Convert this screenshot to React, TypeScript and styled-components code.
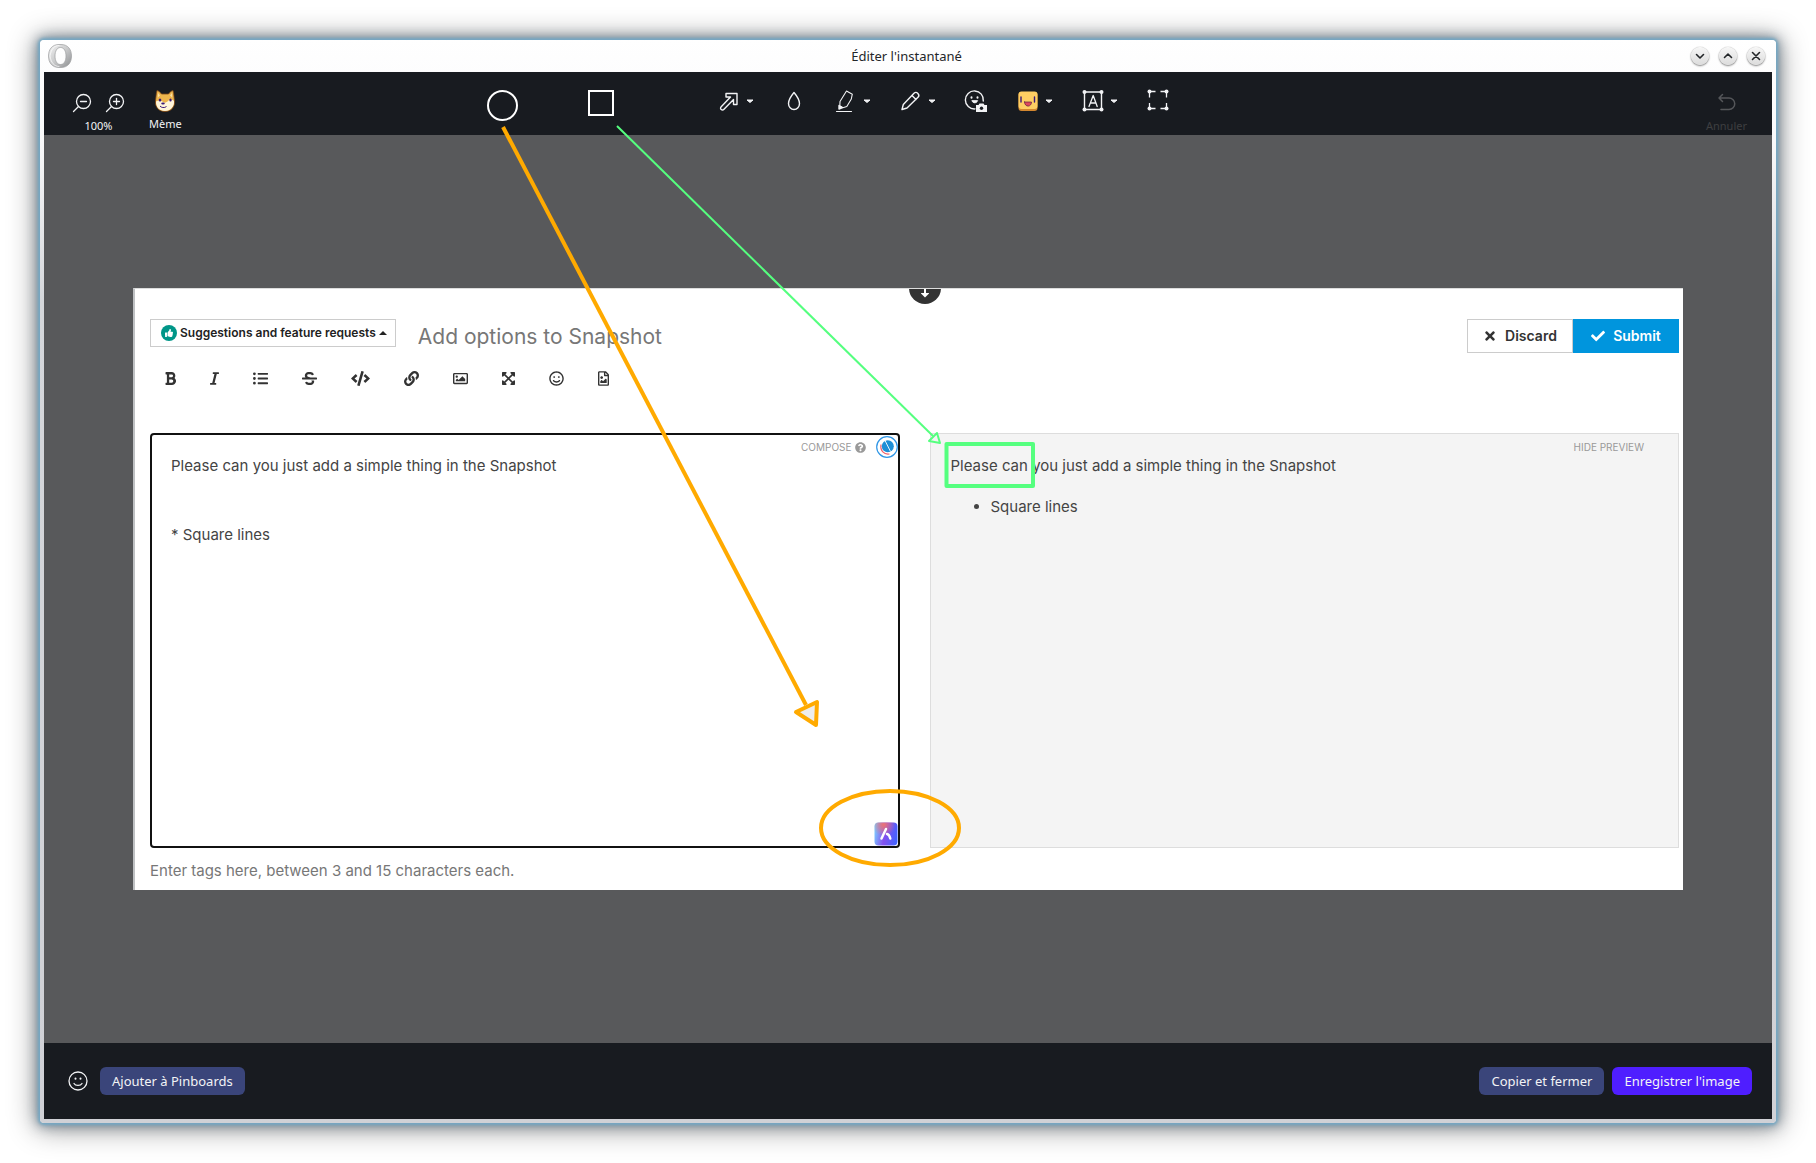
import React from "react";
import styled, { createGlobalStyle } from "styled-components";
import {
  FaBold,
  FaCheck,
  FaCode,
  FaExpandArrowsAlt,
  FaItalic,
  FaLink,
  FaListUl,
  FaQuestionCircle,
  FaRegFileImage,
  FaRegImage,
  FaRegSmile,
  FaStrikethrough,
  FaThumbsUp,
  FaTimes,
} from "react-icons/fa";

const uiFont = `"Noto Sans", sans-serif`;
const docFont = `Inter, "Liberation Sans", sans-serif`;

const GlobalStyle = createGlobalStyle`
  *, *::before, *::after { box-sizing: border-box; }
  body { margin: 0; background: #fff; font-family: ${uiFont}; }
  button { font: inherit; color: inherit; background: none; border: 0; padding: 0; cursor: pointer; }
  input, textarea { font: inherit; color: inherit; border: 0; padding: 0; margin: 0; background: none; outline: 0; }
  svg { display: block; flex: none; }
`;

const Desktop = styled.div`
  display: flex;
  min-height: 100vh;
  padding: 40px;
`;

const Window = styled.div`
  flex: 1;
  min-width: 0;
  display: flex;
  flex-direction: column;
  padding: 0 4px 4px;
  border-radius: 4px;
  background: linear-gradient(#fff 0, #f9f9fa 100px, #d5d7db 260px, #d0d1d6 100%);
  box-shadow:
    0 0 3px 2px #74a9c6,
    0 0 12px 3px rgba(70, 95, 115, 0.6),
    0 2px 28px 4px rgba(0, 0, 0, 0.42);
`;

const TitleBar = styled.header`
  display: grid;
  grid-template-columns: 1fr auto 1fr;
  align-items: center;
  height: 32px;
  padding: 0 7px 0 4px;
`;

const WindowTitle = styled.h1`
  margin: 0;
  font-size: 13px;
  font-weight: 400;
  line-height: 20px;
  color: #232629;
`;

const WindowControls = styled.div`
  display: flex;
  justify-content: flex-end;
  gap: 10px;
`;

const WindowControl = styled.button`
  display: grid;
  place-items: center;
  width: 18px;
  height: 18px;
  border-radius: 50%;
  background: linear-gradient(#f7f7f7, #dcdcdc);
  box-shadow: 0 0 1px rgba(0, 0, 0, 0.4), 0 1px 2px rgba(0, 0, 0, 0.45);
`;

const Content = styled.main`
  position: relative;
  flex: 1;
  display: flex;
  flex-direction: column;
`;

const Toolbar = styled.div`
  display: grid;
  grid-template-columns: 442px 1fr auto;
  align-items: start;
  height: 63px;
  padding: 17px 25px 0 0;
  background: #181b20;
  color: #f2f3f5;
  font-size: 11px;
  line-height: 14px;
`;

const ViewTools = styled.div`
  display: flex;
  gap: 24px;
  padding-left: 28px;
`;

const Zoom = styled.div`
  display: flex;
  flex-direction: column;
  align-items: center;
  gap: 6px;
  padding-top: 4px;
`;

const ZoomButtons = styled.div`
  display: flex;
  gap: 13px;
`;

const LabelledTool = styled.button<{ $muted?: boolean }>`
  display: flex;
  flex-direction: column;
  align-items: center;
  gap: ${(p) => (p.$muted ? "6px" : "4px")};
  color: ${(p) => (p.$muted ? "#3e3f41" : "inherit")};
`;

const ShapeTools = styled.div`
  display: flex;
  align-items: flex-start;
  gap: 100px;
`;

const Shapes = styled.div`
  display: flex;
  gap: 67px;
`;

const DrawTools = styled.div`
  display: flex;
  gap: 28px;
`;

const Tool = styled.button`
  display: flex;
  align-items: center;
  gap: 5px;
`;

const Canvas = styled.section`
  flex: 1;
  display: flex;
  padding: 153px 89px;
  background: #58595b;
`;

const Snapshot = styled.article`
  position: relative;
  flex: 1;
  min-width: 0;
  display: flex;
  flex-direction: column;
  overflow: hidden;
  padding: 30px 4px 0 15px;
  border-top: 1px solid #dcdddd;
  border-left: 2px solid #bfc1c3;
  background: #fff;
  color: #333;
  font-family: ${docFont};
`;

const Grip = styled.button`
  position: absolute;
  top: -17px;
  left: 50%;
  display: grid;
  place-items: end center;
  width: 32px;
  height: 32px;
  padding-bottom: 6px;
  border-radius: 50%;
  background: #333;
`;

const ComposerHead = styled.div`
  display: flex;
  align-items: flex-start;
  height: 34px;
`;

const CategoryButton = styled.button`
  display: flex;
  align-items: center;
  gap: 3px;
  height: 28px;
  padding: 0 8px 0 10px;
  border: 1px solid #ccc;
  color: #222;
  font-size: 12px;
  font-weight: 600;
  line-height: 16px;
  white-space: nowrap;
`;

const CategoryIcon = styled.span`
  display: grid;
  place-items: center;
  width: 16px;
  height: 16px;
  border-radius: 50%;
  background: #009688;
  color: #fff;
`;

const TopicTitle = styled.input`
  flex: 1;
  min-width: 0;
  height: 34px;
  padding: 0 22px;
  color: #777;
  font-size: 21px;
`;

const ActionButton = styled.button<{ $primary?: boolean }>`
  display: flex;
  align-items: center;
  justify-content: center;
  gap: 8px;
  width: 106px;
  height: 34px;
  border: 1px solid ${(p) => (p.$primary ? "#0095dd" : "#ccc")};
  background: ${(p) => (p.$primary ? "#0095dd" : "#fff")};
  color: ${(p) => (p.$primary ? "#fff" : "#333")};
  font-size: 14px;
  font-weight: 600;
  line-height: 20px;
`;

const FormatBar = styled.div`
  display: flex;
  align-items: center;
  gap: 34px;
  height: 20px;
  margin: 15px 0 45px;
  padding-left: 15px;
`;

const FormatButton = styled.button<{ $width: number }>`
  width: ${(p) => p.$width}px;

  svg {
    width: 100%;
    height: 15px;
  }
`;

const Panes = styled.div`
  flex: 1;
  display: grid;
  grid-template-columns: 1fr 1fr;
  gap: 30px;
  color: #444;
  font-size: 15px;
  line-height: 23px;
`;

const Pane = styled.section<{ $preview?: boolean }>`
  position: relative;
  display: flex;
  flex-direction: column;
  border: ${(p) => (p.$preview ? "1px solid #ddd" : "2px solid #111")};
  border-radius: ${(p) => (p.$preview ? "0" : "4px")};
  padding: ${(p) => (p.$preview ? "20px" : "0")};
  background: ${(p) => (p.$preview ? "#f4f4f4" : "#fff")};
`;

const ComposeArea = styled.textarea`
  flex: 1;
  display: block;
  width: 100%;
  padding: 19px;
  resize: none;
`;

const PaneCorner = styled.div<{ $inset?: boolean }>`
  position: absolute;
  top: 0;
  right: ${(p) => (p.$inset ? "34px" : "0")};
  display: flex;
  align-items: center;
  height: ${(p) => (p.$inset ? "26px" : "24px")};
  gap: 3px;
  color: #999;
  font-size: 10px;
  line-height: 14px;
`;

const CompassButton = styled.button`
  margin-left: 7px;
`;

const AssistantButton = styled.button`
  position: absolute;
  right: 0;
  bottom: 0;
`;

const Paragraph = styled.p`
  margin: 0 0 18px;
`;

const BulletList = styled.ul`
  margin: 0;
  padding-left: 40px;
`;

const TagsInput = styled.input`
  width: 100%;
  height: 42px;
  padding-top: 2px;
  font-size: 15px;
  color: #777;

  &::placeholder {
    color: #777;
    opacity: 1;
  }
`;

const Footer = styled.footer`
  display: flex;
  align-items: center;
  gap: 8px;
  height: 76px;
  padding: 0 20px 0 24px;
  background: #181b20;
  color: #f2f3f5;
`;

const FooterButton = styled.button<{ $accent?: boolean }>`
  height: 28px;
  padding: 0 12px;
  border-radius: 6px;
  background: ${(p) => (p.$accent ? "#4f1eff" : "#3a457a")};
  font-size: 13px;
  line-height: 18px;
  white-space: nowrap;
`;

const EmojiButton = styled.button`
  margin-right: 4px;
`;

const Spacer = styled.div`
  flex: 1;
`;

const Annotations = styled.svg`
  position: absolute;
  inset: 0;
  width: 100%;
  height: 100%;
  pointer-events: none;
`;

const line = {
  fill: "none",
  stroke: "currentColor",
  strokeLinecap: "round" as const,
  strokeLinejoin: "round" as const,
};

const OperaLogo = () => (
  <svg width="24" height="24" viewBox="0 0 24 24" aria-hidden="true">
    <defs>
      <linearGradient id="opera" x1="0" y1="0" x2="1" y2="1">
        <stop offset="0" stopColor="#f4f4f4" />
        <stop offset="0.5" stopColor="#c9cacb" />
        <stop offset="1" stopColor="#8c8e90" />
      </linearGradient>
    </defs>
    <path
      fillRule="evenodd"
      fill="url(#opera)"
      stroke="#9b9c9e"
      strokeWidth="0.7"
      d="M11 .5h2C20 .5 23.500 5.500 23.500 12S20 23.500 13 23.500h-2C4 23.500.5 18.500.5 12S4 .5 11 .5zM12.500 3.500c-3.500 0-5.500 3.500-5.500 8.500s2 8.500 5.500 8.500S18 17 18 12s-2-8.500-5.500-8.500z"
    />
    <path d="M11 1.500c-5 0-8 4-9 10.500 1 6.500 4 10.500 9 10.500" {...line} stroke="#fff" opacity="0.7" />
  </svg>
);

const ControlGlyph = ({ d }: { d: string }) => (
  <svg width="12" height="12" viewBox="0 0 12 12" aria-hidden="true">
    <path d={d} {...line} stroke="#232629" strokeWidth="1.6" />
  </svg>
);

const ZoomIcon = ({ plus }: { plus?: boolean }) => (
  <svg width="20" height="20" viewBox="0 0 20 20" aria-hidden="true">
    <g {...line} strokeWidth="1.3">
      <circle cx="11.500" cy="8.500" r="7" />
      <path d="M6.500 13.500l-5 5M8.500 8.500h6" />
      {plus && <path d="M11.500 5.500v6" />}
    </g>
  </svg>
);

const MemeIcon = () => (
  <svg width="24" height="24" viewBox="0 0 24 24" aria-hidden="true">
    <path
      d="M4 1.500c2 .5 3.500 2 4.500 3.500h7c1-1.500 2.500-3 4.500-3.500 1 4 1 7 1.500 10.500.5 5.500-3 10.500-9.500 10.500S2 17.500 2.500 12C3 8.500 3 5.500 4 1.500z"
      fill="#edb54d"
      stroke="#7a4416"
      strokeWidth="0.8"
    />
    <path d="M5 4l2 2.500-2.200 2zM19 4l-2 2.500 2.200 2z" fill="#fbdfa4" />
    <path d="M3 12.500c3-1.500 5-1 7 .5 2 1.500 3.500.5 5.500-1.500 2-1 4-1 5.500.5.500 5.500-3.500 10-9 10s-9-3.500-9-9.500z" fill="#fff5da" />
    <ellipse cx="7" cy="11" rx="1.300" ry="1.500" fill="#3c1a78" />
    <ellipse cx="17.500" cy="11" rx="1.200" ry="1.500" fill="#3c1a78" />
    <ellipse cx="10" cy="14.500" rx="1.800" ry="1.100" fill="#3c1a78" />
    <path d="M7 17c1 1.600 4.500 2.300 6.500.5" fill="none" stroke="#3c1a78" strokeWidth="1" />
  </svg>
);

const CircleTool = () => (
  <svg width="32" height="32" viewBox="0 0 32 32" aria-hidden="true">
    <circle cx="16.500" cy="16.500" r="14.500" fill="none" stroke="#fff" strokeWidth="2" />
  </svg>
);

const SquareTool = () => (
  <svg width="32" height="32" viewBox="0 0 32 32" aria-hidden="true">
    <path d="M4 2h24v24H4z" fill="none" stroke="#fff" strokeWidth="2" />
  </svg>
);

const ToolIcon = ({ children }: { children: React.ReactNode }) => (
  <svg width="24" height="24" viewBox="0 0 24 24" aria-hidden="true">
    <g {...line} strokeWidth="1.4">
      {children}
    </g>
  </svg>
);

const Caret = () => (
  <svg width="8" height="8" viewBox="0 0 8 8" aria-hidden="true">
    <path d="M1 3h6L4 5.500z" fill="currentColor" stroke="currentColor" strokeLinejoin="round" />
  </svg>
);

const Dots = ({ x1, y1, x2, y2 }: { x1: number; y1: number; x2: number; y2: number }) => (
  <g fill="currentColor" stroke="none">
    {[x1, x2].map((x) => [y1, y2].map((y) => <circle key={`${x}-${y}`} cx={x} cy={y} r="2" />))}
  </g>
);

const drawTools: { name: string; menu?: boolean; art: React.ReactNode }[] = [
  {
    name: "Flèche",
    menu: true,
    art: <path d="M9 4.500h11v11h-3.500v-5L7 20.300c-1 1-2 .9-2.800.2s-.9-1.900 0-2.800L13.500 8H9z" />,
  },
  { name: "Flou", art: <path d="M12 3.500c2.500 3 5.500 7.500 5.500 11a5.500 6 0 0 1-11 0c0-3.500 3-8 5.500-11z" /> },
  {
    name: "Surligneur",
    menu: true,
    art: (
      <>
        <path d="M12.500 2l5.800 3.200-1 4.800-4.500 7.500-4 1.200-3-1.700.2-4.500z" strokeWidth="1.1" />
        <path d="M5 16.500l3.500 2-3.500 1.500z" fill="currentColor" />
        <path d="M2.500 22.500h15" strokeWidth="1.1" />
      </>
    ),
  },
  {
    name: "Crayon",
    menu: true,
    art: <path d="M3 20.500l1.300-5L15 4.300c1.300-1.300 2.800-1 3.900.1s1.300 2.600.1 3.900L8 19zM13 6.500l4 4" />,
  },
  {
    name: "Selfie",
    art: (
      <>
        <path d="M11 19.900A9 9 0 1 1 19.300 12" />
        <path d="M7.500 8.300v.4M13.500 8.300v.4" strokeWidth="2" />
        <path d="M8 12c1 2.500 4.500 2.500 5.500 0z" fill="currentColor" strokeWidth="1" />
        <path d="M12 16h2.500l1-1.500h4l1 1.500H23v7H12z" fill="currentColor" stroke="none" />
        <circle cx="17.500" cy="19.300" r="1.700" fill="#181b20" stroke="none" />
      </>
    ),
  },
  {
    name: "Autocollant",
    menu: true,
    art: (
      <g stroke="none">
        <rect x="2.500" y="3" width="19" height="19" rx="3" fill="#d3872f" />
        <rect x="2.500" y="2.500" width="19" height="17.500" rx="3" fill="#ffce63" />
        <path d="M5 8v5M18.500 8v5" stroke="#3c1a78" strokeWidth="1.400" />
        <path d="M8.500 13h7c0 5.500-7 5.500-7 0z" fill="#e0475d" stroke="#5c2040" strokeWidth="0.700" />
      </g>
    ),
  },
  {
    name: "Texte",
    menu: true,
    art: (
      <>
        <path d="M3.500 3h17V20.500h-17z" />
        <Dots x1={3.5} y1={3} x2={20.5} y2={20.5} />
        <path d="M8 17.500L12.200 6.500l4 11M9.500 14h5.200" strokeWidth="1.3" />
      </>
    ),
  },
  {
    name: "Recadrer",
    art: (
      <>
        <path
          d="M3.500 8.500V2.500h6M14.500 2.500h6v6M3.500 14v5.500h6M14.500 19.500h6V14"
          strokeLinecap="butt"
          strokeWidth="1.300"
        />
        <Dots x1={3.5} y1={2.5} x2={20.5} y2={19.5} />
      </>
    ),
  },
];

const UndoIcon = () => (
  <svg width="24" height="24" viewBox="0 0 24 24" aria-hidden="true">
    <path d="M8.500 5.500L5 9l3.500 3.500M5 9h10a5.500 5.500 0 0 1 0 11.500H7" {...line} stroke="#55575a" strokeWidth="1.5" />
  </svg>
);

const formatTools = [
  { name: "Bold", Icon: FaBold, width: 11 },
  { name: "Italic", Icon: FaItalic, width: 9 },
  { name: "List", Icon: FaListUl, width: 15 },
  { name: "Strikethrough", Icon: FaStrikethrough, width: 15 },
  { name: "Code", Icon: FaCode, width: 19 },
  { name: "Link", Icon: FaLink, width: 15 },
  { name: "Picture", Icon: FaRegImage, width: 15 },
  { name: "Zen mode", Icon: FaExpandArrowsAlt, width: 13 },
  { name: "Emoji", Icon: FaRegSmile, width: 15 },
  { name: "Upload image", Icon: FaRegFileImage, width: 11 },
];

const CompassIcon = () => (
  <svg width="22" height="22" viewBox="0 0 22 22" aria-hidden="true">
    <circle cx="11" cy="11" r="10.300" fill="#fff" stroke="#2f96e6" strokeWidth="1.2" />
    <path d="M5 8.500c-1 6 3 10.500 8.500 9.500" fill="none" stroke="#f0606c" strokeWidth="1.200" />
    <circle cx="11.800" cy="10.300" r="6" fill="#1f8fd6" />
    <path d="M8.500 3.500L14.500 15.500" stroke="#fff" strokeWidth="0.900" />
  </svg>
);

const AssistantIcon = () => (
  <svg width="24" height="24" viewBox="0 0 24 24" aria-hidden="true">
    <defs>
      <linearGradient id="aria" x1="0" y1="0.400" x2="1" y2="0.600">
        <stop offset="0" stopColor="#7cc8ff" />
        <stop offset="0.450" stopColor="#8450ee" />
        <stop offset="1" stopColor="#4263ff" />
      </linearGradient>
      <radialGradient id="ariaGlow" cx="0.4" cy="0.100" r="0.500">
        <stop offset="0" stopColor="#ee7272" />
        <stop offset="1" stopColor="#ee7272" stopOpacity="0" />
      </radialGradient>
    </defs>
    <rect x="0.500" y="0.500" width="23" height="23" rx="4" fill="url(#aria)" />
    <rect x="0.500" y="0.500" width="23" height="23" rx="4" fill="url(#ariaGlow)" />
    <path d="M12 7L7.500 16.500M13 12c1.800.3 2.700 2.200 3.300 4.500" {...line} stroke="#fff" strokeWidth="2.500" />
  </svg>
);

const SmileIcon = () => (
  <svg width="20" height="20" viewBox="0 0 20 20" aria-hidden="true">
    <g {...line} strokeWidth="1.3">
      <circle cx="10" cy="10" r="9" />
      <path d="M6 12.500c1.500 2.500 6.500 2.500 8 0" />
      <path d="M7.500 7.500v.2M12.500 7.500v.2" strokeWidth="2" />
    </g>
  </svg>
);

export default function App() {
  return (
    <>
      <GlobalStyle />
      <Desktop>
        <Window>
          <TitleBar>
            <OperaLogo />
            <WindowTitle>Éditer l'instantané</WindowTitle>
            <WindowControls>
              <WindowControl aria-label="Réduire">
                <ControlGlyph d="M2.500 4.500L6 8l3.500-3.500" />
              </WindowControl>
              <WindowControl aria-label="Agrandir">
                <ControlGlyph d="M2.500 7.500L6 4l3.500 3.500" />
              </WindowControl>
              <WindowControl aria-label="Fermer">
                <ControlGlyph d="M2.500 2.500l7 7M9.500 2.500l-7 7" />
              </WindowControl>
            </WindowControls>
          </TitleBar>

          <Content>
            <Toolbar>
              <ViewTools>
                <Zoom>
                  <ZoomButtons>
                    <button aria-label="Zoom arrière">
                      <ZoomIcon />
                    </button>
                    <button aria-label="Zoom avant">
                      <ZoomIcon plus />
                    </button>
                  </ZoomButtons>
                  <span>100%</span>
                </Zoom>
                <LabelledTool>
                  <MemeIcon />
                  Mème
                </LabelledTool>
              </ViewTools>

              <ShapeTools>
                <Shapes>
                  <button aria-label="Cercle">
                    <CircleTool />
                  </button>
                  <button aria-label="Carré">
                    <SquareTool />
                  </button>
                </Shapes>
                <DrawTools>
                  {drawTools.map((tool) => (
                    <Tool key={tool.name} aria-label={tool.name}>
                      <ToolIcon>{tool.art}</ToolIcon>
                      {tool.menu && <Caret />}
                    </Tool>
                  ))}
                </DrawTools>
              </ShapeTools>

              <LabelledTool $muted>
                <UndoIcon />
                Annuler
              </LabelledTool>
            </Toolbar>

            <Canvas>
              <Snapshot>
                <Grip aria-label="Collapse composer">
                  <svg width="8" height="14" viewBox="0 0 8 14" aria-hidden="true">
                    <path d="M4 0v11M2 10L4 12l2-2z" stroke="#fff" strokeWidth="2" fill="#fff" />
                  </svg>
                </Grip>

                <ComposerHead>
                  <CategoryButton>
                    <CategoryIcon>
                      <FaThumbsUp size={8} />
                    </CategoryIcon>
                    Suggestions and feature requests
                    <svg width="8" height="4" viewBox="0 0 8 4" aria-hidden="true">
                      <path d="M0 4l4-4 4 4z" fill="#222" />
                    </svg>
                  </CategoryButton>
                  <TopicTitle aria-label="Topic title" defaultValue="Add options to Snapshot" />
                  <ActionButton>
                    <FaTimes size={14} />
                    Discard
                  </ActionButton>
                  <ActionButton $primary>
                    <FaCheck size={14} />
                    Submit
                  </ActionButton>
                </ComposerHead>

                <FormatBar>
                  {formatTools.map(({ name, Icon, width }) => (
                    <FormatButton key={name} $width={width} aria-label={name}>
                      <Icon />
                    </FormatButton>
                  ))}
                </FormatBar>

                <Panes>
                  <Pane>
                    <ComposeArea
                      aria-label="Compose"
                      spellCheck={false}
                      defaultValue={"Please can you just add a simple thing in the Snapshot\n\n\n* Square lines"}
                    />
                    <PaneCorner>
                      COMPOSE
                      <FaQuestionCircle size={11} />
                      <CompassButton aria-label="Compass">
                        <CompassIcon />
                      </CompassButton>
                    </PaneCorner>
                    <AssistantButton aria-label="Assistant">
                      <AssistantIcon />
                    </AssistantButton>
                  </Pane>
                  <Pane $preview>
                    <PaneCorner as="button" $inset>
                      HIDE PREVIEW
                    </PaneCorner>
                    <Paragraph>Please can you just add a simple thing in the Snapshot</Paragraph>
                    <BulletList>
                      <li>Square lines</li>
                    </BulletList>
                  </Pane>
                </Panes>

                <TagsInput aria-label="Tags" placeholder="Enter tags here, between 3 and 15 characters each." />
              </Snapshot>
            </Canvas>

            <Footer>
              <EmojiButton aria-label="Emoji">
                <SmileIcon />
              </EmojiButton>
              <FooterButton>Ajouter à Pinboards</FooterButton>
              <Spacer />
              <FooterButton>Copier et fermer</FooterButton>
              <FooterButton $accent>Enregistrer l'image</FooterButton>
            </Footer>

            <Annotations viewBox="0 0 1728 1047" preserveAspectRatio="none" aria-hidden="true">
              <g fill="none" stroke="#ffaa00" strokeWidth="4" strokeLinejoin="round">
                <path d="M459 55L762 633" />
                <path d="M752 640l21-10-1 23z" fill="#ededed" />
                <ellipse cx="846" cy="756" rx="69" ry="37" />
              </g>
              <g fill="none" stroke="#55ff7f" strokeLinejoin="round">
                <path d="M573 54L889 364" strokeWidth="2" />
                <path d="M885 369l8-8 3 10z" strokeWidth="2" />
                <path d="M902.500 372h86.500v42h-86.500z" strokeWidth="4" />
              </g>
            </Annotations>
          </Content>
        </Window>
      </Desktop>
    </>
  );
}
